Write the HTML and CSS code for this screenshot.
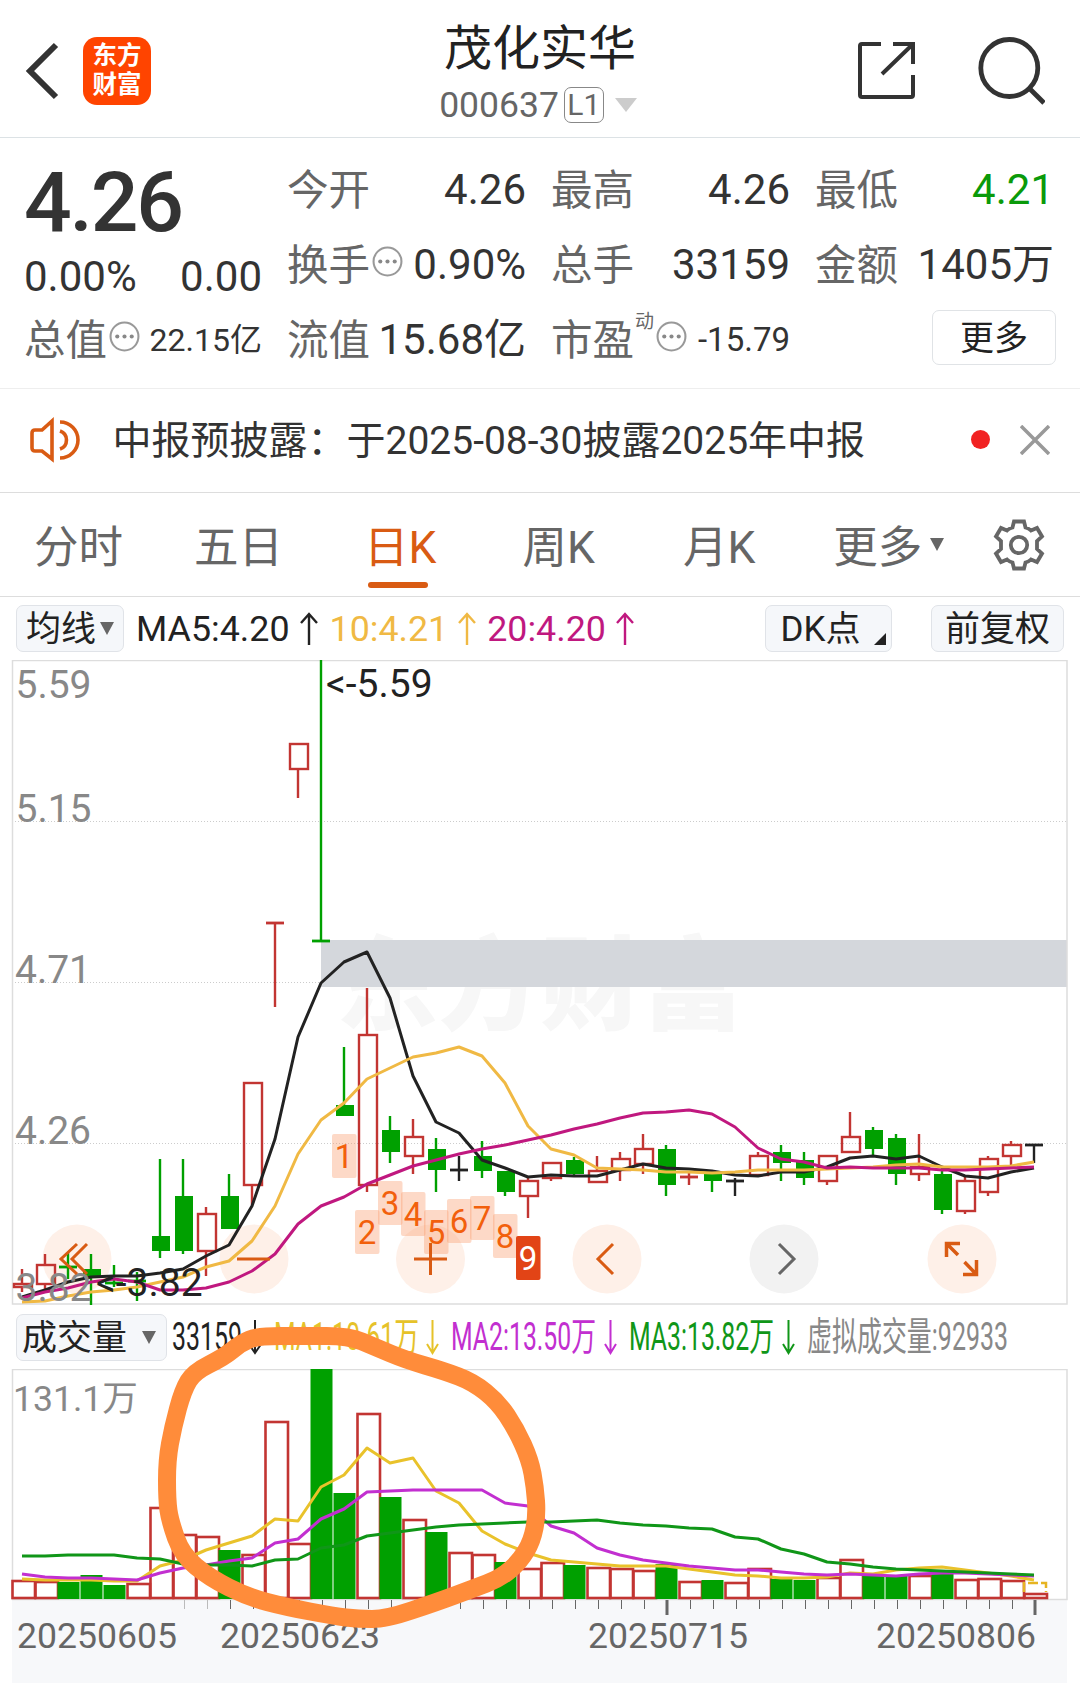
FILE: index.html
```html
<!DOCTYPE html>
<html lang="zh-CN">
<head>
    <meta charset="UTF-8">
    <meta name="viewport" content="width=device-width, initial-scale=1.0">
    <title>茂化实华 000637</title>
    <link rel="stylesheet" href="styles.css">
</head>
<body>
    <header class="topbar">
        <div class="topbar-side">
            <svg class="icon-back" width="36" height="60" viewBox="0 0 36 60"><path d="M32 4L6 30L32 56" fill="none" stroke="#333" stroke-width="6"/></svg>
            <div class="logo">东方<br>财富</div>
        </div>
        <div class="stock">
            <h1>茂化实华</h1>
            <div class="stock-code">000637<span class="level">L1</span><i class="tri tri-code"></i></div>
        </div>
        <div class="topbar-side topbar-right">
            <svg width="60" height="60" viewBox="0 0 60 60" fill="none" stroke="#333" stroke-width="4">
                <path d="M26 4H7Q5 4 5 6V55Q5 57 7 57H56Q58 57 58 55V35M38 4H58V24M57 5L27 34"/>
            </svg>
            <svg width="70" height="70" viewBox="0 0 70 70" fill="none" stroke="#333" stroke-width="4.800">
                <circle cx="34.300" cy="33" r="28.500"/><path d="M54 53L69 68"/>
            </svg>
        </div>
    </header>

    <section class="quote">
        <div class="quote-main">
            <div class="price">4.26</div>
            <div class="cell change"><span>0.00%</span><span>0.00</span></div>
            <div class="cell total"><label>总值</label><svg class="dots" viewBox="0 0 30 30"><use href="#dots"/></svg><b class="small">22.15亿</b></div>
        </div>
        <div class="quote-grid">
            <div class="cell"><label>今开</label><b>4.26</b></div>
            <div class="cell"><label>最高</label><b>4.26</b></div>
            <div class="cell"><label>最低</label><b class="down">4.21</b></div>
            <div class="cell"><label>换手</label><svg class="dots" viewBox="0 0 30 30"><use href="#dots"/></svg><b>0.90%</b></div>
            <div class="cell"><label>总手</label><b>33159</b></div>
            <div class="cell"><label>金额</label><b>1405万</b></div>
            <div class="cell"><label>流值</label><b>15.68亿</b></div>
            <div class="cell"><label>市盈</label><sup>动</sup><svg class="dots" viewBox="0 0 30 30"><use href="#dots"/></svg><b class="pe">-15.79</b></div>
            <div class="cell"><button class="more">更多</button></div>
        </div>
    </section>

    <section class="notice">
        <svg width="54" height="50" viewBox="0 0 54 50" fill="none" stroke="#d95b13" stroke-width="3.600">
            <path d="M25 5V43L15 35H8Q5 35 5 32V17Q5 14 8 14H15Z"/>
            <path d="M33 15A9.500 9.500 0 0 1 33 33M33 6A18 18 0 0 1 33 42"/>
        </svg>
        <p>中报预披露：于2025-08-30披露2025年中报</p>
        <i class="red-dot"></i>
        <svg class="close" width="30" height="30" viewBox="0 0 30 30"><path d="M1 1L29 29M29 1L1 29" stroke="#999" stroke-width="3.500"/></svg>
    </section>

    <nav class="tabs">
        <a>分时</a>
        <a>五日</a>
        <a class="active">日K</a>
        <a>周K</a>
        <a>月K</a>
        <a>更多<i class="tri tri-tab"></i></a>
        <svg width="54" height="54" viewBox="-27 -27 54 54" fill="none" stroke="#666" stroke-width="3.800">
            <path d="M-5 -23.500H5L6.500 -17.500Q10 -16.500 12 -14.500L18 -17L23 -8.500L18 -4V4L23 8.500L18 17L12 14.500Q10 16.500 6.500 17.500L5 23.500H-5L-6.500 17.500Q-10 16.500 -12 14.500L-18 17L-23 8.500L-18 4V-4L-23 -8.500L-18 -17L-12 -14.500Q-10 -16.500 -6.500 -17.500Z"/>
            <circle r="8.200"/>
        </svg>
    </nav>

    <section class="ma-bar">
        <button class="chip chip-ma">均线<i class="tri tri-chip"></i></button>
        <span class="ma ma5">MA5:4.20<svg viewBox="0 0 18 34"><use href="#up"/></svg></span>
        <span class="ma ma10">10:4.21<svg viewBox="0 0 18 34"><use href="#up"/></svg></span>
        <span class="ma ma20">20:4.20<svg viewBox="0 0 18 34"><use href="#up"/></svg></span>
        <button class="chip chip-dk">DK点<i class="corner"></i></button>
        <button class="chip chip-fq">前复权</button>
    </section>

    <svg class="kline" viewBox="0 660 1080 645">
        <text class="watermark" x="336" y="1022" textLength="408" lengthAdjust="spacingAndGlyphs">东方财富</text>
        <g class="grid">
            <path d="M12 821.500H1067M12 982.500H1067M12 1143.500H1067" stroke-dasharray="1 2"/>
        </g>
        <rect x="321" y="940" width="746" height="47" fill="#d4d7dc"/>
        <path class="frame" d="M12.500 660.500H1067V1304H12.500Z"/>
        <g id="tools"></g>
        <g id="candles"></g>
        <g id="k-lines"></g>
        <g class="axis-text">
            <text x="15.500" y="698">5.59</text>
            <text x="15.500" y="822">5.15</text>
            <text x="15" y="983">4.71</text>
            <text x="15" y="1144">4.26</text>
            <text x="15.500" y="1301">3.82</text>
        </g>
        <g class="peak-text">
            <text x="326" y="697">&lt;-5.59</text>
            <text x="96" y="1296">&lt;-3.82</text>
        </g>
        <g id="nine"></g>
        <g id="tool-icons" fill="none" stroke="#d95b13" stroke-width="3">
            <path d="M77 1244L61 1259L77 1274M87 1244L72 1259L87 1274"/>
            <path d="M237 1259H270"/>
            <path d="M414 1259H447M430.500 1243V1275"/>
            <path d="M613 1244L598 1259L613 1274"/>
            <path d="M779 1244L794 1259L779 1274" stroke="#666"/>
            <path d="M960 1243.500H946.500V1257M947 1244L958 1255M963 1274.500H976.500V1260M976 1274L964.500 1262" stroke-width="3.500"/>
        </g>
    </svg>

    <section class="vol-bar">
        <button class="chip chip-vol">成交量<i class="tri tri-chip"></i></button>
        <svg class="vol-legend" width="850" height="64" viewBox="170 1305 850 64">
            <g>
                <text x="171" y="1350" textLength="70" lengthAdjust="spacingAndGlyphs" fill="#222">33159</text>
                <text x="273" y="1350" textLength="145" lengthAdjust="spacingAndGlyphs" fill="#e6c229">MA1:10.61万</text>
                <text x="450" y="1350" textLength="145" lengthAdjust="spacingAndGlyphs" fill="#c22fd0">MA2:13.50万</text>
                <text x="628" y="1350" textLength="145" lengthAdjust="spacingAndGlyphs" fill="#109618">MA3:13.82万</text>
                <text x="806" y="1350" textLength="201" lengthAdjust="spacingAndGlyphs" fill="#888">虚拟成交量:92933</text>
            </g>
            <g fill="none" stroke-width="2">
                <path d="M254 1320V1353M248.500 1345L254 1353L259.500 1345" stroke="#222"/>
                <path d="M431.500 1320V1353M426 1344L431.500 1353L437 1344" stroke="#e6c229"/>
                <path d="M609.500 1320V1353M604 1344L609.500 1353L615 1344" stroke="#c22fd0"/>
                <path d="M787.500 1320V1353M782 1344L787.500 1353L793 1344" stroke="#109618"/>
            </g>
        </svg>
    </section>

    <svg class="volume" viewBox="0 1369 1080 314">
        <rect x="12" y="1600" width="1055" height="83" fill="#f7f8fa"/>
        <path class="frame" d="M12.500 1369.500H1067V1599.500H12.500Z"/>
        <text class="vol-max" x="13" y="1411">131.1万</text>
        <g id="bars"></g>
        <g id="v-lines"></g>
        <g id="ticks"></g>
        <g class="dates">
            <text x="17" y="1648">20250605</text>
            <text x="220" y="1648">20250623</text>
            <text x="588" y="1648">20250715</text>
            <text x="876" y="1648">20250806</text>
        </g>
    </svg>

    <!-- hand-drawn mark over the volume spike -->
    <svg class="marker" width="400" height="320" viewBox="150 1320 400 320">
        <path id="scribble"/>
    </svg>

    <svg width="0" height="0" class="defs">
        <defs>
            <g id="dots"><circle cx="15" cy="15" r="13.500" fill="none" stroke="#999" stroke-width="2"/><circle cx="8" cy="15" r="2" fill="#888"/><circle cx="15" cy="15" r="2" fill="#888"/><circle cx="22" cy="15" r="2" fill="#888"/></g>
            <path id="up" d="M9 33V3M1 11L9 2L17 11" fill="none" stroke="currentColor" stroke-width="2.400"/>
        </defs>
    </svg>
    <script src="chart.js"></script>
</body>
</html>
```
FILE: styles.css
```css
* {
    box-sizing: border-box;
}

body {
    margin: 0;
    width: 1080px;
    height: 1683px;
    position: relative;
    overflow: hidden;
    background: #fff;
    color: #333;
    font-family: Roboto, "Noto Sans CJK SC", sans-serif;
}

svg {
    display: block;
    flex: none;
}

button {
    font-family: inherit;
    color: #222;
}

i {
    flex: none;
}

.tri {
    display: block;
    border-style: solid;
    border-color: #666 transparent transparent;
}

/* top bar */
.topbar {
    display: flex;
    justify-content: space-between;
    height: 138px;
    border-bottom: 1px solid #dce2e5;
}

.topbar-side {
    display: flex;
    align-items: center;
    width: 240px;
    padding: 4px 0 0 24px;
}

.icon-back {
    margin-right: 23px;
}

.logo {
    width: 68px;
    height: 68px;
    padding-top: 4px;
    border-radius: 14px;
    background: #ff4400;
    color: #fff;
    font-size: 24.5px;
    font-weight: bold;
    line-height: 29px;
    text-align: center;
}

.topbar-right {
    justify-content: flex-end;
    gap: 60px;
    padding: 3px 35px 0 0;
}

.stock {
    text-align: center;
}

.stock h1 {
    margin: 19px 0 0;
    font-size: 48px;
    line-height: 60px;
    font-weight: normal;
    color: #222;
}

.stock-code {
    display: flex;
    align-items: center;
    justify-content: center;
    margin: 6px 4px 0 0;
    height: 40px;
    line-height: 40px;
    font-size: 35.5px;
    color: #666;
}

.level {
    width: 40px;
    height: 36px;
    margin-left: 5px;
    border: 1.5px solid #888;
    border-radius: 7px;
    font-size: 30px;
    line-height: 34px;
}

.tri-code {
    margin-left: 11px;
    border-width: 14px 11px 0;
    border-top-color: #ccc;
}

/* quote */
.quote {
    display: flex;
    height: 251px;
    padding: 0 26px 0 24px;
    border-bottom: 1px solid #eee;
}

.quote-main {
    width: 239px;
    margin-right: 25px;
    padding-top: 22px;
}

.price {
    font-size: 84px;
    line-height: 86px;
    font-weight: 500;
    letter-spacing: -2.2px;
}

.cell {
    display: flex;
    align-items: center;
    height: 75px;
    font-size: 41.5px;
    line-height: 60px;
    white-space: nowrap;
}

.cell label {
    position: relative;
    top: 1px;
    color: #666;
}

.cell b {
    margin-left: auto;
    font-size: 42px;
    font-weight: normal;
}

.cell .down {
    color: #0a9a0a;
}

.cell .small {
    font-size: 32px;
}

.cell .pe {
    font-size: 33px;
}

.cell sup {
    margin: 0 0 36px 1px;
    font-size: 19px;
    line-height: 20px;
    color: #666;
}

.dots {
    width: 31px;
    height: 31px;
    margin: 0 0 7px 2px;
}

.change {
    height: 62px;
    font-size: 42px;
    justify-content: space-between;
}

.total {
    height: 63px;
}

.quote-grid {
    display: grid;
    grid-template-columns: 239px 239px 239px;
    column-gap: 25px;
    align-content: start;
    padding-top: 14px;
}

.more {
    width: 124px;
    height: 55px;
    margin: 0 -2px 4px auto;
    padding: 0;
    border: 1.5px solid #e0e3e6;
    border-radius: 7px;
    background: #fff;
    font-size: 34px;
    line-height: 50px;
}

/* notice */
.notice {
    display: flex;
    align-items: center;
    height: 104px;
    padding: 0 30px 0 27px;
    border-bottom: 1px solid #ddd;
}

.notice p {
    flex: 1;
    margin: 0 0 0 31.5px;
    font-size: 39px;
    line-height: 60px;
    white-space: nowrap;
}

.notice .red-dot,
.notice .close {
    margin-bottom: 2px;
}

.red-dot {
    width: 19px;
    height: 19px;
    margin-right: 30px;
    border-radius: 50%;
    background: #f12222;
}

/* period tabs */
.tabs {
    display: flex;
    align-items: center;
    height: 104px;
    padding-left: 34px;
    border-bottom: 1px solid #ddd;
    font-size: 44.5px;
    line-height: 94px;
    color: #666;
}

.tabs a {
    display: flex;
    align-items: center;
    position: relative;
    height: 100px;
    padding-top: 6px;
    margin-right: 71px;
}

.tabs a:nth-child(2) {
    margin-right: 81px;
}

.tabs a:nth-child(3) {
    margin-right: 86px;
}

.tabs a:nth-child(4) {
    margin-right: 88px;
}

.tabs a:nth-child(5) {
    margin-right: 78px;
}

.tabs a:nth-child(6) {
    margin-right: 48px;
}

.tabs .active {
    color: #d95b13;
}

.tabs .active::after {
    content: "";
    position: absolute;
    left: 4px;
    bottom: 7px;
    width: 60px;
    height: 6px;
    border-radius: 3px;
    background: #d95b13;
}

.tri-tab {
    margin: 0 0 6px 8px;
    border-width: 13px 7.5px 0;
}

/* chart toolbars */
.ma-bar,
.vol-bar {
    display: flex;
    align-items: center;
    height: 63px;
    padding: 0 16px;
}

.chip {
    display: flex;
    align-items: center;
    justify-content: center;
    height: 47px;
    padding: 3px 0 0;
    border: 1.5px solid #e0e3e8;
    border-radius: 7px;
    background: #f5f7fa;
    font-size: 35px;
    line-height: 44px;
    white-space: nowrap;
}

.tri-chip {
    margin: 0 0 3px 4px;
    border-width: 13px 7px 0;
}

.chip-ma {
    width: 108px;
}

.ma {
    display: flex;
    align-items: center;
    padding-top: 1px;
    font-size: 35.8px;
    white-space: nowrap;
}

.ma svg {
    width: 18px;
    height: 34px;
    margin-left: 10px;
}

.ma5 {
    margin-left: 12px;
    color: #222;
}

.ma10 {
    margin-left: 12px;
    color: #f0b944;
}

.ma20 {
    margin-left: 11px;
    color: #c0187f;
}

.chip-dk {
    position: relative;
    width: 127px;
    margin-left: auto;
    padding-right: 16px;
}

.corner {
    position: absolute;
    right: 5px;
    bottom: 6px;
    border-style: solid;
    border-width: 0 0 12px 12px;
    border-color: transparent transparent #222;
}

.chip-fq {
    width: 133px;
    margin-left: 39px;
}

/* charts */
.kline {
    width: 1080px;
    height: 645px;
}

.frame {
    fill: none;
    stroke: #ddd;
    stroke-width: 1.5;
}

.grid {
    stroke: #ccc;
    stroke-width: 1;
}

.watermark {
    font-family: "Noto Sans CJK SC", sans-serif;
    font-size: 102px;
    font-weight: 900;
    fill: #f7f7f7;
}

.axis-text {
    font-size: 39px;
    fill: #888;
}

.peak-text {
    font-size: 39px;
    fill: #222;
}

.nine-text {
    font-size: 33px;
    text-anchor: middle;
    fill: #f2600c;
}

.vol-bar {
    height: 64px;
}

.chip-vol {
    width: 151px;
    padding-right: 5px;
}

.chip-vol .tri-chip {
    margin-left: 15px;
}

.vol-legend {
    margin-left: 4px;
    font-size: 39px;
}

.volume {
    width: 1080px;
    height: 314px;
}

.vol-max {
    font-size: 35.6px;
    fill: #888;
}

.dates {
    font-size: 35.6px;
    fill: #666;
}

.marker {
    position: absolute;
    left: 150px;
    top: 1320px;
    fill: none;
    stroke: #ff8c3a;
    stroke-width: 18;
    stroke-linejoin: round;
}

.defs {
    position: absolute;
}
```
FILE: chart.js
```js
const RED = '#c23532', GREEN = '#00a000', BLACK = '#222';
const xAt = i => 22 + i * 23;

// color, high, body top, body bottom, low
const candles = [
    ['r', 1269, 1284, 1287, 1292], ['r', 1254, 1265, 1284, 1289], ['g', 1253, 1267, 1267, 1279],
    ['g', 1254, 1269, 1278, 1305], ['g', 1265, 1283, 1283, 1287], ['g', 1272, 1281, 1281, 1301],
    ['g', 1159, 1236, 1251, 1258], ['g', 1159, 1196, 1251, 1254], ['r', 1207, 1214, 1251, 1276],
    ['g', 1174, 1196, 1229, 1229], ['r', 1083, 1083, 1185, 1205], ['r', 923, 923, 923, 1007],
    ['r', 744, 744, 769, 798], ['g', 660, 941, 941, 941], ['g', 1047, 1105, 1116, 1116],
    ['r', 988, 1035, 1185, 1192], ['g', 1116, 1130, 1152, 1163], ['r', 1119, 1137, 1156, 1174],
    ['g', 1138, 1149, 1170, 1192], ['b', 1156, 1170, 1170, 1181], ['g', 1141, 1156, 1171, 1178],
    ['g', 1171, 1171, 1192, 1196], ['r', 1178, 1181, 1196, 1218], ['r', 1163, 1163, 1178, 1181],
    ['g', 1157, 1160, 1174, 1177], ['r', 1156, 1171, 1182, 1182], ['r', 1152, 1159, 1170, 1181],
    ['r', 1134, 1149, 1164, 1174], ['g', 1145, 1149, 1185, 1196], ['r', 1173, 1177, 1177, 1185],
    ['g', 1174, 1174, 1181, 1192], ['b', 1178, 1181, 1181, 1196], ['r', 1152, 1156, 1175, 1176],
    ['g', 1145, 1152, 1163, 1181], ['g', 1152, 1160, 1178, 1185], ['r', 1156, 1156, 1181, 1185],
    ['r', 1112, 1137, 1152, 1152], ['g', 1127, 1130, 1149, 1156], ['g', 1134, 1138, 1174, 1185],
    ['r', 1134, 1167, 1174, 1181], ['g', 1168, 1174, 1210, 1214], ['r', 1177, 1181, 1211, 1214],
    ['r', 1156, 1159, 1192, 1196], ['r', 1141, 1145, 1156, 1169], ['b', 1145, 1145, 1145, 1163]
];

const ma5 = [1297, 1290, 1282, 1277, 1276, 1276, 1273, 1269, 1256, 1245, 1206, 1139, 1037, 983, 962, 952, 998, 1076, 1122, 1133, 1160, 1168, 1177, 1175, 1176, 1176, 1170, 1164, 1168, 1169, 1171, 1175, 1176, 1172, 1172, 1167, 1158, 1156, 1159, 1156, 1167, 1176, 1178, 1172, 1168];
const ma10 = [1302, 1301, 1296, 1292, 1290, 1287, 1282, 1277, 1267, 1261, 1241, 1206, 1154, 1120, 1103, 1079, 1068, 1057, 1053, 1047, 1056, 1083, 1126, 1149, 1155, 1168, 1169, 1170, 1172, 1172, 1173, 1172, 1170, 1170, 1170, 1169, 1168, 1167, 1165, 1164, 1167, 1167, 1167, 1166, 1162];
const ma20 = [1298, 1292, 1288, 1282, 1279, 1282, 1290, 1290, 1288, 1282, 1271, 1254, 1224, 1206, 1197, 1184, 1175, 1166, 1160, 1154, 1149, 1145, 1140, 1135, 1129, 1124, 1118, 1113, 1112, 1110, 1114, 1127, 1148, 1159, 1162, 1168, 1167, 1168, 1168, 1168, 1170, 1170, 1169, 1168, 1167];

// volume bars and their averages, as heights above the base line
const volumes = [19, 18, 17, 24, 14, 16, 92, 65, 63, 49, 45, 178, 56, 230, 106, 186, 102, 80, 67, 47, 45, 37, 31, 37, 34, 32, 31, 29, 35, 18, 19, 17, 31, 20, 19, 22, 40, 24, 23, 24, 26, 20, 21, 19, 6];
const volColors = 'rrgggrrrrgrrrggrgrgrrgrrgrrrgrgrrggrrggrgrrrr';
const vma1 = [20, 19, 19, 19, 18, 18, 33, 39, 49, 56, 63, 80, 78, 112, 124, 151, 136, 141, 108, 96, 68, 55, 46, 39, 37, 35, 33, 33, 33, 30, 27, 24, 23, 21, 21, 22, 26, 25, 29, 31, 32, 29, 26, 23, 19];
const vma2 = [25, 22, 21, 21, 20, 19, 26, 31, 34, 38, 41, 56, 60, 80, 90, 107, 108, 109, 109, 109, 109, 96, 93, 73, 66, 51, 44, 39, 36, 33, 31, 29, 29, 27, 25, 24, 25, 24, 23, 25, 26, 26, 25, 24, 23];
const vma3 = [43, 43, 44, 44, 44, 41, 40, 35, 34, 34, 33, 39, 40, 51, 54, 63, 66, 69, 72, 74, 75, 76, 77, 77, 78, 79, 76, 74, 73, 71, 70, 62, 60, 50, 45, 37, 35, 32, 30, 29, 28, 27, 26, 25, 24];

const line = (ys, color) =>
    `<polyline points="${ys.map((y, i) => xAt(i) + ',' + y).join(' ')}" fill="none" stroke="${color}" stroke-width="3" stroke-linejoin="round"/>`;

const put = (id, html) => { document.getElementById(id).innerHTML = html; };

put('candles', candles.map(([c, high, top, bottom, low], i) => {
    const x = xAt(i);
    const color = { r: RED, g: GREEN, b: BLACK }[c];
    const wick = `<path d="M${x} ${high}V${top}M${x} ${bottom}V${low}" stroke="${color}" stroke-width="2.4"/>`;
    if (top === bottom) {
        return wick + `<path d="M${x - 9} ${top}H${x + 9}" stroke="${color}" stroke-width="2.8"/>`;
    }
    if (c === 'g') {
        return wick + `<rect x="${x - 8}" y="${top}" width="18" height="${bottom - top}" fill="${color}"/>`;
    }
    return wick + `<rect x="${x - 8}" y="${top}" width="18" height="${bottom - top}" fill="none" stroke="${color}" stroke-width="2.4"/>`;
}).join(''));

put('k-lines', line(ma5, BLACK) + line(ma10, '#f0b944') + line(ma20, '#c0187f'));

// round tool buttons
put('tools', [77, 254, 430.5, 607, 784, 962].map(x =>
    `<circle cx="${x}" cy="1259" r="34.500" fill="${x === 784 ? '#f2f2f2' : '#fef0e8'}"/>`).join(''));

// nine-turn counters
put('nine', [1134, 1210, 1181, 1192, 1210, 1199, 1196, 1214, 1236].map((y, i) => {
    const last = i === 8;
    return `<rect x="${332 + i * 23}" y="${y}" width="24.500" height="44" rx="2" fill="${last ? '#e24416' : '#fb9b6b'}" fill-opacity="${last ? 1 : 0.38}"/>` +
        `<text class="nine-text" x="${344 + i * 23}" y="${y + 34}"${last ? ' style="fill:#fff"' : ''}>${i + 1}</text>`;
}).join(''));

put('bars', volumes.map((h, i) => {
    const x = 12 + i * 23;
    if (volColors[i] === 'g') {
        return `<rect x="${x - 0.5}" y="${1599 - h}" width="22" height="${h}" fill="${GREEN}"/>`;
    }
    return `<rect x="${x + 0.5}" y="${1600 - h}" width="22.5" height="${h - 2}" fill="none" stroke="${RED}" stroke-width="2.6"/>`;
}).join('') + '<path d="M1024 1592V1583H1046V1592" fill="none" stroke="#e6b422" stroke-width="2.500" stroke-dasharray="10 3"/>');

const base = hs => hs.map(h => 1599 - h);
put('v-lines', line(base(vma1), '#e9c22b') + line(base(vma2), '#c22fd0') + line(base(vma3), '#109618'));

let ticks = '';
for (let i = 7; i < 45; i++) {
    const major = i === 28 || i === 44;
    const x = xAt(i) + (major ? 1 : 1.5);
    ticks += `<path d="M${x} 1600V${major ? 1615 : 1609}" stroke="${i < 9 ? '#bbb' : '#666'}" stroke-width="${major ? 3 : 1}"/>`;
}
put('ticks', ticks);

// closed stroke smoothed through the midpoints of its points
const pts = [[349, 1336], [304, 1336], [258, 1336], [241, 1343], [224, 1357], [194, 1372], [183, 1390], [173, 1427], [167, 1460], [167, 1500], [170, 1521], [182, 1555], [210, 1578], [248, 1597], [286, 1607], [334, 1616], [358, 1619], [386, 1619], [437, 1602], [472, 1589], [501, 1578], [520, 1561], [532, 1541], [537, 1515], [535, 1487], [530, 1460], [516, 1429], [498, 1402], [473, 1382], [444, 1371], [406, 1360], [375, 1347]];
const mid = (a, b) => `${(a[0] + b[0]) / 2} ${(a[1] + b[1]) / 2}`;
const n = pts.length;
document.getElementById('scribble').setAttribute('d',
    `M${mid(pts[n - 1], pts[0])}` + pts.map((p, i) => `Q${p[0]} ${p[1]} ${mid(p, pts[(i + 1) % n])}`).join('') + 'Z');
```
